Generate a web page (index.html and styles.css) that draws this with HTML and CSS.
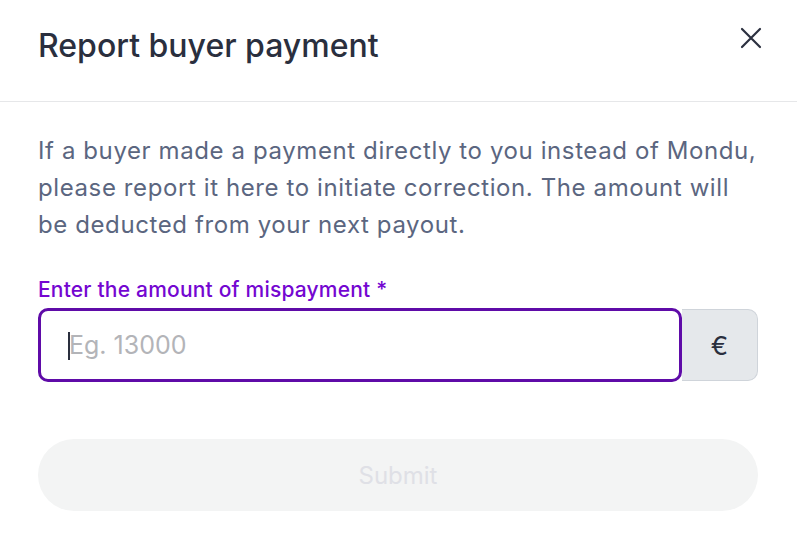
FILE: index.html
```html
<!DOCTYPE html>
<html lang="en">
<head>
<meta charset="utf-8">
<title>Report buyer payment</title>
<link rel="stylesheet" href="styles.css">
</head>
<body>
<div class="modal">
  <header class="modal-header">
    <h1 class="modal-title">Report buyer payment</h1>
    <button class="close-btn" aria-label="Close">
      <svg width="22" height="22" viewBox="0 0 22 22" fill="none" stroke="#2b303f" stroke-width="2.2" stroke-linecap="round"><path d="M2 2 L20 20 M20 2 L2 20"/></svg>
    </button>
  </header>
  <div class="modal-body">
    <p class="description">If a buyer made a payment directly to you instead of Mondu, please report it here to initiate correction. The amount will be deducted from your next payout.</p>
    <label class="field-label" for="amount">Enter the amount of mispayment *</label>
    <div class="input-group">
      <div class="input-wrap">
        <span class="caret"></span>
        <input id="amount" class="amount-input" type="text" placeholder="Eg. 13000">
      </div>
      <span class="addon">€</span>
    </div>
    <button class="submit-btn" disabled>Submit</button>
  </div>
</div>
</body>
</html>
```
FILE: styles.css
```css
* { box-sizing: border-box; }
html, body { margin: 0; padding: 0; background: #fff; }
body { font-family: Inter, "Noto Sans", sans-serif; }

.modal { width: 797px; }

.modal-header {
  height: 102px;
  border-bottom: 1px solid #e6e7e9;
  display: flex;
  justify-content: space-between;
  align-items: flex-start;
  padding: 24px 35px 0 38px;
}
.modal-title {
  margin: 0;
  font-size: 32px;
  line-height: 44px;
  font-weight: 500;
  color: #2a2f3e;
}
.close-btn {
  background: none;
  border: 0;
  padding: 0;
  margin-top: 3px;
  width: 22px;
  height: 22px;
  cursor: pointer;
}
.close-btn svg { display: block; }

.modal-body { padding: 30px 39px 0 38px; }

.description {
  margin: 0;
  font-size: 24px;
  line-height: 37px;
  letter-spacing: 0.6px;
  color: #5b6680;
}

.field-label {
  display: block;
  margin-top: 34px;
  font-size: 21px;
  line-height: 26px;
  font-weight: 500;
  letter-spacing: 0.2px;
  color: #7406d1;
}

.input-group {
  display: flex;
  margin-top: 5px;
  height: 74px;
}
.input-wrap {
  position: relative;
  flex: 1;
  border: 3px solid #5f0ba8;
  border-radius: 10px;
  background: #fff;
  display: flex;
  align-items: center;
  padding-left: 28px;
}
.caret {
  position: absolute;
  left: 27px;
  top: 21px;
  width: 2px;
  height: 28px;
  background: #2a2f3e;
}
.amount-input {
  border: 0;
  outline: none;
  font-family: inherit;
  font-size: 25px;
  color: #2a2f3e;
  width: 100%;
  background: transparent;
  padding: 0;
}
.amount-input::placeholder { color: #b3b4b8; }

.addon {
  width: 76px;
  margin: 1px 0;
  background: #e5e8eb;
  border: 1px solid #cfd4da;
  border-left: 0;
  border-radius: 0 10px 10px 0;
  display: flex;
  align-items: center;
  justify-content: center;
  font-size: 26px;
  color: #2a2f3e;
}

.submit-btn {
  display: block;
  width: 100%;
  margin-top: 57px;
  height: 72px;
  border: 0;
  border-radius: 36px;
  background: #f3f4f4;
  color: #dfe0e6;
  font-family: inherit;
  font-size: 24px;
}
```
